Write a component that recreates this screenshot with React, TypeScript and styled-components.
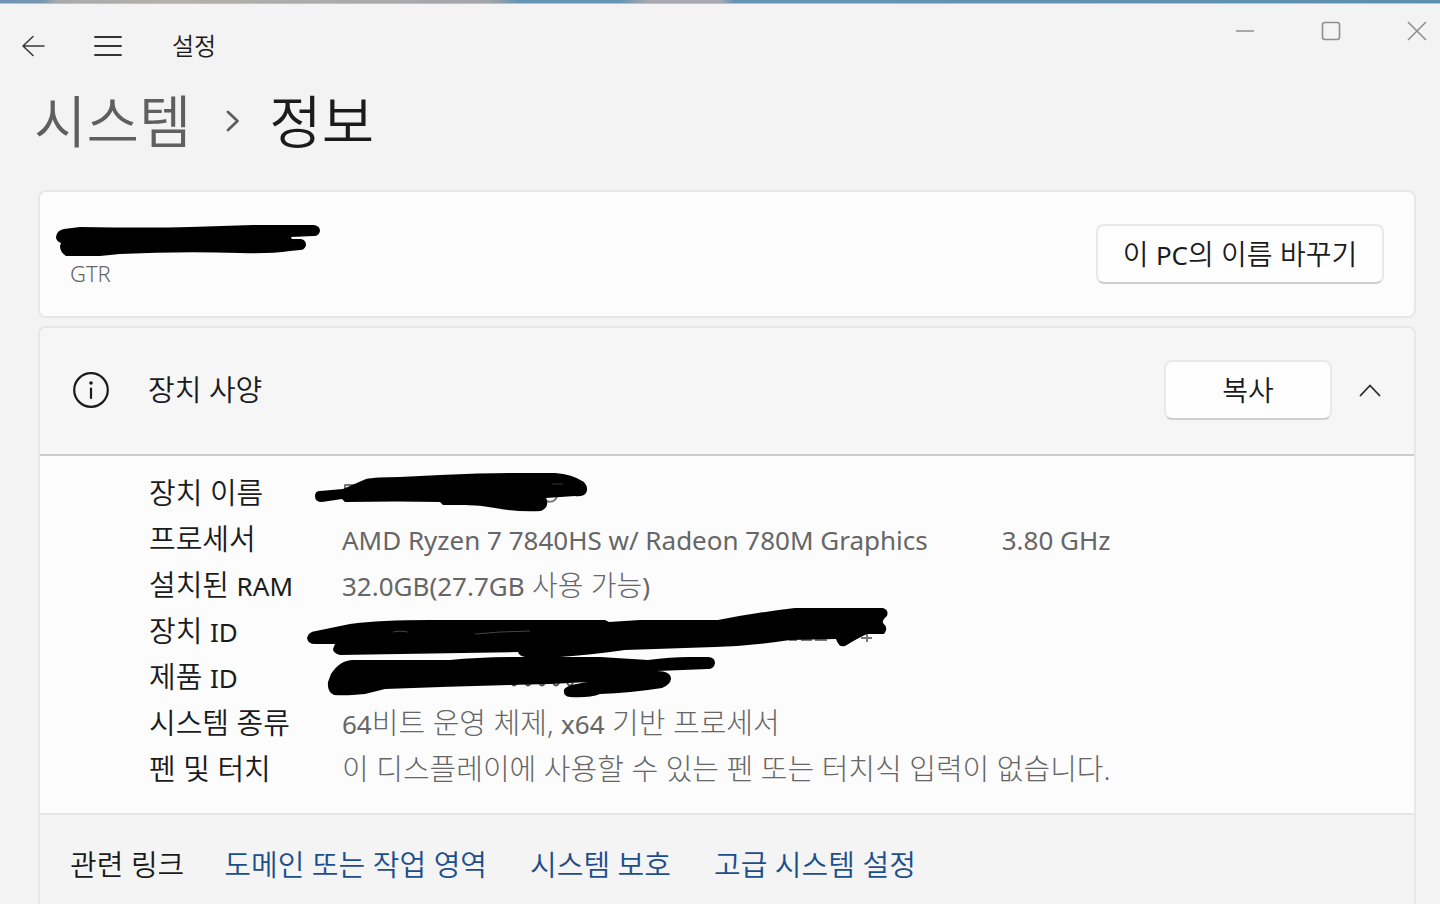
import React from "react";
import styled, { createGlobalStyle } from "styled-components";

const GlobalStyle = createGlobalStyle`
  *, *::before, *::after { box-sizing: border-box; }
  html, body, #root { height: 100%; }
  body {
    margin: 0;
    background: #f3f3f3;
    color: #1b1b1b;
    font-family: "Noto Sans", "Noto Sans CJK KR", sans-serif;
    font-weight: 350;
    overflow: hidden;
  }
`;

const Window = styled.div`
  display: flex;
  flex-direction: column;
  min-height: 100%;
`;

const DesktopEdge = styled.div`
  height: 4px;
  border-bottom: 1px solid #b4c4ce;
  background: linear-gradient(
    90deg,
    #6f93b4 0,
    #7897b0 3%,
    #a9aaab 4%,
    #b3b1ac 12%,
    #a3a5a9 34%,
    #6593b3 36%,
    #6593b3 43%,
    #a8a9b0 45%,
    #a8a9b0 50%,
    #6593b3 51%,
    #5f8fae 100%
  );
`;

const TitleBar = styled.header`
  display: flex;
  align-items: flex-start;
  justify-content: space-between;
  height: 79px;
  padding-left: 19px;
`;

const TitleLeft = styled.div`
  display: flex;
  align-items: center;
  height: 83px;
`;

const IconButton = styled.button<{ $width: number; $height: number }>`
  display: flex;
  align-items: center;
  justify-content: center;
  width: ${(p) => p.$width}px;
  height: ${(p) => p.$height}px;
  padding: 0;
  border: 0;
  background: transparent;
  color: inherit;
`;

const NavButtons = styled.div`
  display: flex;
  gap: 48px;
  margin-right: 50px;
`;

const AppTitle = styled.span`
  font-size: 24px;
  line-height: 32px;
`;

const WindowControls = styled.div`
  display: flex;
  gap: 40px;
  color: #8f8f8f;
`;

const Breadcrumb = styled.nav`
  display: flex;
  align-items: center;
  gap: 29px;
  height: 76px;
  padding-left: 34px;
  font-size: 57px;
  line-height: 72px;
`;

const Crumb = styled.a`
  color: #5f5f5f;
  text-decoration: none;
`;

const PageTitle = styled.h1`
  margin: 0;
  font: inherit;
`;

const Content = styled.main`
  display: flex;
  flex-direction: column;
  flex: 1;
  gap: 8px;
  padding: 31px 24px 0 38px;
`;

const Card = styled.section`
  border: 2px solid #e7e7e7;
  border-radius: 8px;
  background: #fcfcfc;
`;

const NameCard = styled(Card)`
  display: flex;
  align-items: center;
  justify-content: space-between;
  height: 128px;
  padding: 0 30px;
`;

const PcName = styled.div`
  position: relative;
  padding-top: 38px;
  color: #666;
  font-size: 22px;
  line-height: 32px;
`;

const Latin = styled.span`
  font-size: 26px;
  font-weight: 400;
`;

const SpecCard = styled(Card)`
  display: flex;
  flex-direction: column;
  flex: 1;
  border-bottom: 0;
  border-radius: 8px 8px 0 0;
`;

const SpecHeader = styled.div`
  display: flex;
  align-items: center;
  height: 128px;
  padding: 0 6px 2px 32px;
  border-bottom: 2px solid #cbcbcb;
  border-radius: 6px 6px 0 0;
  background: #f6f6f6;
`;

const SpecTitle = styled.h2`
  flex: 1;
  margin: 0 0 0 38px;
  font-size: 29px;
  font-weight: inherit;
  line-height: 40px;
`;

const PushButton = styled.button<{ $width: number }>`
  width: ${(p) => p.$width}px;
  height: 60px;
  padding: 0;
  border: 2px solid #e9e9e9;
  border-bottom-color: #cfcfcf;
  border-radius: 8px;
  background: #fefefe;
  color: inherit;
  font: inherit;
  font-size: 28px;
  line-height: 40px;
`;

const SpecTable = styled.table`
  margin: 14px 0 21px 109px;
  border-collapse: collapse;
  font-size: 29px;
  line-height: 40px;
`;

const SpecLabel = styled.th`
  width: 193px;
  height: 46px;
  padding: 0;
  font-weight: inherit;
  text-align: left;
  white-space: nowrap;
`;

const SpecValue = styled.td<{ $size?: number }>`
  position: relative;
  padding: 0;
  color: #666;
  font-size: ${(p) => p.$size ?? 29}px;
  font-weight: 300;
  white-space: nowrap;
`;

const Speed = styled.span`
  margin-left: 74px;
`;

const RelatedLinks = styled.div`
  display: flex;
  flex: 1;
  align-items: flex-start;
  gap: 40px;
  padding: 30px 30px 0;
  border-top: 2px solid #e5e5e5;
  background: #f4f4f4;
  font-size: 29px;
  line-height: 40px;
`;

const LinkList = styled.nav`
  display: flex;
  gap: 43px;
`;

const RelatedLink = styled.a`
  color: #1d4e8c;
  text-decoration: none;
`;

const Scribble = styled.svg<{ $left: number; $top: number }>`
  position: absolute;
  left: ${(p) => p.$left}px;
  top: ${(p) => p.$top}px;
  stroke-linejoin: round;
`;

const NameScribble = () => (
  <Scribble $left={-16} $top={3} width="270" height="36" viewBox="54 222 270 36" aria-hidden="true">
    <path d="M56 237Q57 230 64 229L80 227Q150 228 190 227L253 225H314Q320 226 320 231Q319 236 314 236L291 237L292 239H301Q306 240 306 245Q305 250 300 250L290 251Q270 254 240 253Q180 251 120 254L100 256L66 256Q60 252 60 246L61 243Q56 241 56 237Z" />
  </Scribble>
);

const DeviceNameScribble = () => (
  <Scribble $left={-30} $top={-1} width="280" height="46" viewBox="312 469 280 46" aria-hidden="true">
    <path d="M345 490V485H354M545 499C547 503 555 503 557 496" fill="none" stroke="#777" strokeWidth="2" />
    <path d="M315 496Q315 491 320 491L343 489L366 479Q375 477 400 477L440 475Q480 473 510 473H555Q572 474 584 482Q589 488 586 493Q583 497 575 496L546 498Q550 507 541 511Q515 512 495 508Q480 505 465 505H443L440 502Q400 501 345 502L342 499L322 502Q315 502 315 496Z" />
    <path d="M552 484H563" stroke="#333" fill="none" />
  </Scribble>
);

const DeviceIdScribble = () => (
  <Scribble $left={-37} $top={-5} width="590" height="58" viewBox="305 602 590 58" aria-hidden="true">
    <path d="M789 638H797M801 638H812M815 638H827" stroke="#777" strokeWidth="4" />
    <path d="M867 631V641M861 637H872" stroke="#777" strokeWidth="2" />
    <path d="M307 637Q308 631 316 630L350 623Q380 619 430 619H605L609 621L640 619H718Q760 611 795 607H883Q889 609 887 615Q882 619 883 622Q889 627 884 633H867Q858 637 845 645Q839 647 836 638L790 639Q750 645 715 646L625 649Q590 654 560 656H525Q519 655 518 651L400 653L340 654Q333 652 333 648L335 643H315Q308 643 307 637Z" />
    <path d="M393 631L400 630L408 631M475 633L500 631L530 630" stroke="#444" fill="none" />
  </Scribble>
);

const ProductIdScribble = () => (
  <Scribble $left={-17} $top={-1} width="394" height="48" viewBox="325 653 394 48" aria-hidden="true">
    <path
      d="M511 683q3 5 6 0m8 0q3 5 6 0m8 0q3 5 6 0m8 0q3 5 6 0m8 0q3 5 6 0"
      fill="none"
      stroke="#555"
      strokeWidth="2"
    />
    <path d="M328 682L331 674Q340 660 353 660H450Q480 657 520 657H600L648 660Q670 657 690 657H709Q715 658 715 663Q714 669 708 669L657 671Q671 671 671 679Q670 685 662 688Q630 693 600 694Q590 698 570 697Q563 696 564 690Q565 685 588 682L550 684Q470 686 385 689L365 694Q345 696 334 695Q327 692 328 682Z" />
  </Scribble>
);

const specs: { id: string; label: React.ReactNode; value: React.ReactNode; size?: number }[] = [
  { id: "name", label: "장치 이름", value: <DeviceNameScribble /> },
  {
    id: "cpu",
    label: "프로세서",
    value: (
      <Latin>
        AMD Ryzen 7 7840HS w/ Radeon 780M Graphics<Speed>3.80 GHz</Speed>
      </Latin>
    ),
  },
  {
    id: "ram",
    label: (
      <>
        설치된 <Latin>RAM</Latin>
      </>
    ),
    value: (
      <>
        <Latin>32.0GB(27.7GB</Latin> 사용 가능<Latin>)</Latin>
      </>
    ),
    size: 28,
  },
  {
    id: "device",
    label: (
      <>
        장치 <Latin>ID</Latin>
      </>
    ),
    value: <DeviceIdScribble />,
  },
  {
    id: "product",
    label: (
      <>
        제품 <Latin>ID</Latin>
      </>
    ),
    value: <ProductIdScribble />,
  },
  {
    id: "type",
    label: "시스템 종류",
    value: (
      <>
        <Latin>64</Latin>비트 운영 체제, <Latin>x64</Latin> 기반 프로세서
      </>
    ),
  },
  { id: "pen", label: "펜 및 터치", value: "이 디스플레이에 사용할 수 있는 펜 또는 터치식 입력이 없습니다." },
];

const links = ["도메인 또는 작업 영역", "시스템 보호", "고급 시스템 설정"];

export default function App() {
  return (
    <>
      <GlobalStyle />
      <Window>
        <DesktopEdge />
        <TitleBar>
          <TitleLeft>
            <NavButtons>
              <IconButton $width={27} $height={40} aria-label="뒤로">
                <svg width="24" height="22" viewBox="0 0 24 22" fill="none" stroke="#3a3a3a" strokeWidth="1.6" strokeLinecap="round" strokeLinejoin="round">
                  <path d="M12 1.5 2 11l10 9.500M2 11h21" />
                </svg>
              </IconButton>
              <IconButton $width={28} $height={40} aria-label="메뉴">
                <svg width="28" height="22" viewBox="0 0 28 22" fill="none" stroke="#333" strokeWidth="1.8" strokeLinecap="round">
                  <path d="M1 2h26M1 11h26M1 20h26" />
                </svg>
              </IconButton>
            </NavButtons>
            <AppTitle>설정</AppTitle>
          </TitleLeft>
          <WindowControls>
            <IconButton $width={46} $height={53} aria-label="최소화">
              <svg width="20" height="20" viewBox="0 0 20 20" fill="none" stroke="currentColor" strokeWidth="1.5">
                <path d="M1 10h18" />
              </svg>
            </IconButton>
            <IconButton $width={46} $height={53} aria-label="최대화">
              <svg width="20" height="20" viewBox="0 0 20 20" fill="none" stroke="currentColor" strokeWidth="1.600">
                <rect x="1.500" y="1.500" width="17" height="17" rx="2.500" />
              </svg>
            </IconButton>
            <IconButton $width={46} $height={53} aria-label="닫기">
              <svg width="20" height="20" viewBox="0 0 20 20" fill="none" stroke="currentColor" strokeWidth="1.600">
                <path d="m1 1 18 18M19 1 1 19" />
              </svg>
            </IconButton>
          </WindowControls>
        </TitleBar>
        <Breadcrumb>
          <Crumb href="#system">시스템</Crumb>
          <svg width="20" height="22" viewBox="-6 0 20 22" fill="none" stroke="#5f5f5f" strokeWidth="2.800" strokeLinecap="round" strokeLinejoin="round">
            <path d="m2 2 9.500 9L2 20" />
          </svg>
          <PageTitle>정보</PageTitle>
        </Breadcrumb>
        <Content>
          <NameCard>
            <PcName>
              GTR
              <NameScribble />
            </PcName>
            <PushButton $width={288}>
              이 <Latin>PC</Latin>의 이름 바꾸기
            </PushButton>
          </NameCard>
          <SpecCard>
            <SpecHeader>
              <svg width="38" height="38" viewBox="0 0 38 38" fill="none" stroke="#1b1b1b" strokeWidth="2.200" strokeLinecap="round">
                <circle cx="19" cy="19" r="16.800" />
                <path d="M19 17.500v9.500" />
                <circle cx="19" cy="12" r="1.800" fill="#1b1b1b" stroke="none" />
              </svg>
              <SpecTitle>장치 사양</SpecTitle>
              <PushButton $width={168}>복사</PushButton>
              <IconButton $width={76} $height={60} aria-label="접기" aria-expanded="true">
                <svg width="22" height="14" viewBox="0 0 22 14" fill="none" stroke="#2a2a2a" strokeWidth="1.800" strokeLinecap="round" strokeLinejoin="round">
                  <path d="m1.500 12.500 9.500-10 9.500 10" />
                </svg>
              </IconButton>
            </SpecHeader>
            <SpecTable>
              <tbody>
                {specs.map((s) => (
                  <tr key={s.id}>
                    <SpecLabel scope="row">{s.label}</SpecLabel>
                    <SpecValue $size={s.size}>{s.value}</SpecValue>
                  </tr>
                ))}
              </tbody>
            </SpecTable>
            <RelatedLinks>
              <span>관련 링크</span>
              <LinkList>
                {links.map((l) => (
                  <RelatedLink key={l} href="#related">
                    {l}
                  </RelatedLink>
                ))}
              </LinkList>
            </RelatedLinks>
          </SpecCard>
        </Content>
      </Window>
    </>
  );
}
